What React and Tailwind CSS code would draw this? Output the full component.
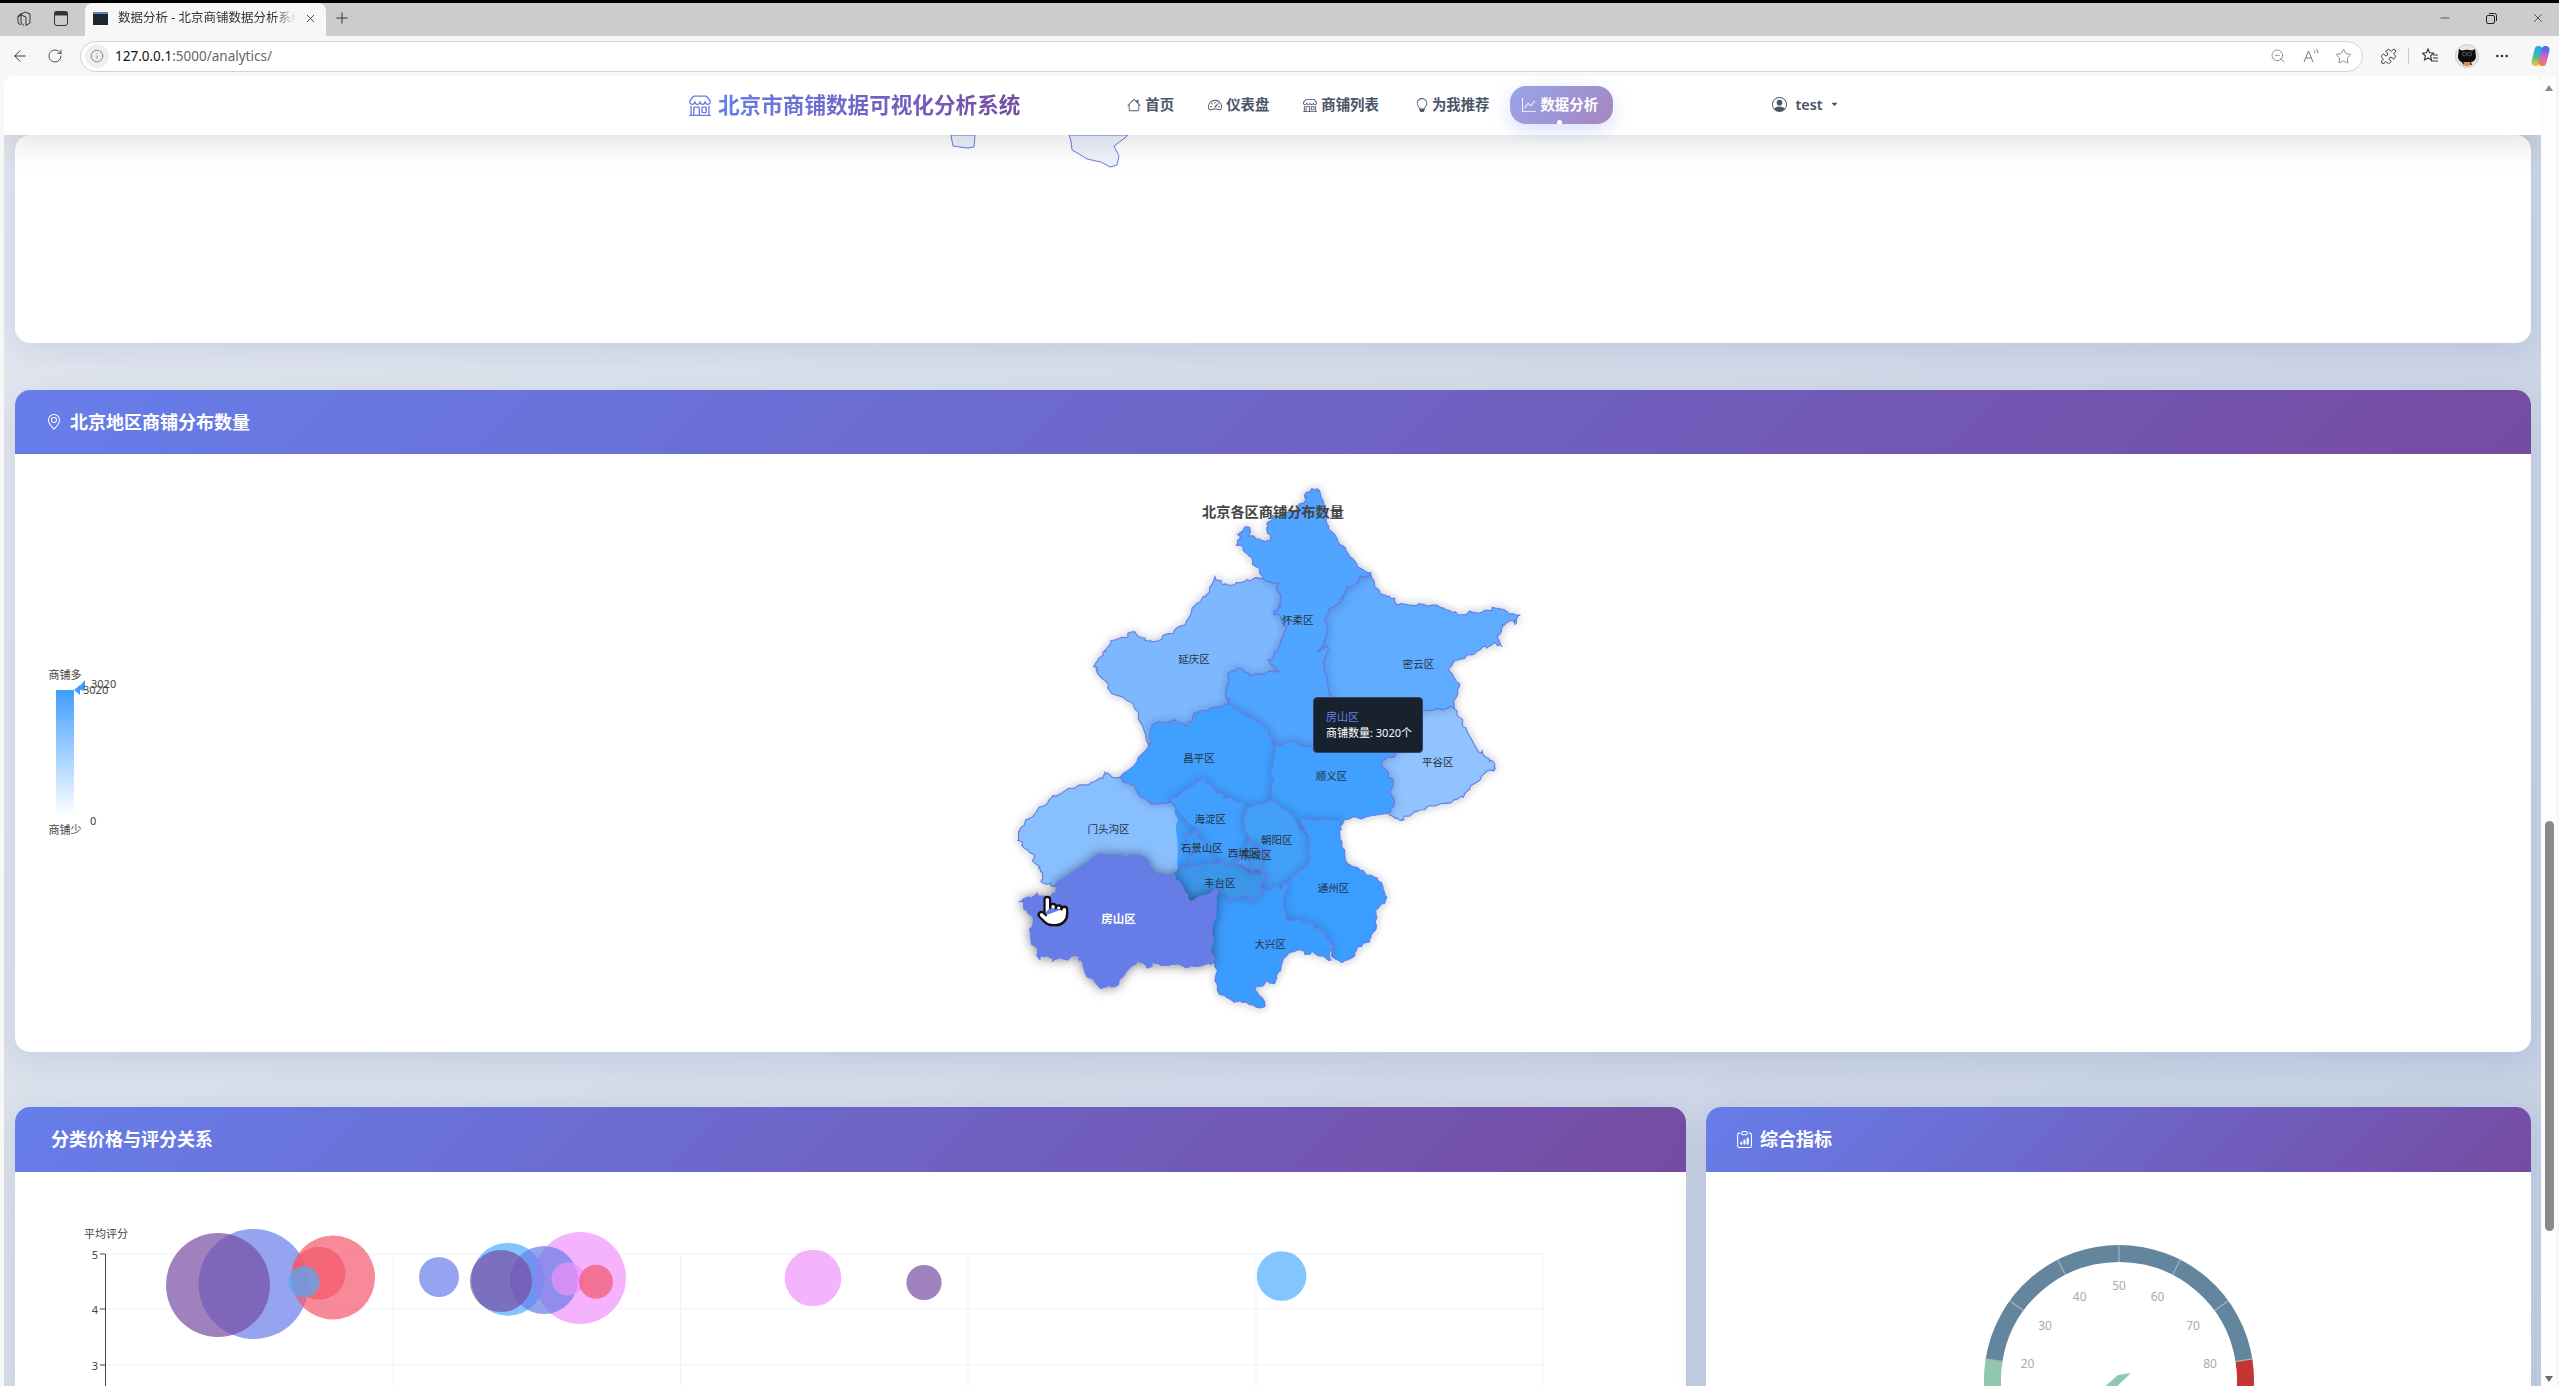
import React from "react";
import { ArrowLeft, RotateCw, Info, ZoomOut, Star, Puzzle, Minus, X, Plus, Ellipsis, Pointer } from "lucide-react";
import { BsShop, BsHouse, BsSpeedometer2, BsLightbulb, BsGraphUp, BsPersonCircle, BsGeoAlt, BsClipboardData, BsCaretDownFill } from "react-icons/bs";

const mx = (x) => 990 + x / 2.8;
const my = (y) => 470 + y / 3;
const noise = (x, y) => [
  Math.sin(x * 0.73 + y * 0.31) * 1.1 + Math.sin(x * 0.19 - y * 0.47) * 0.8 + Math.sin(x * 1.7 + y * 2.1) * 0.8,
  Math.sin(x * 0.37 - y * 0.83) * 1.1 + Math.cos(x * 0.53 + y * 0.17) * 0.8 + Math.cos(x * 2.3 - y * 1.3) * 0.8,
];
const sub = (a, b, d) => {
  if (d === 0) return [];
  const m = [(a[0] + b[0]) / 2, (a[1] + b[1]) / 2];
  const n = noise(m[0], m[1]);
  const p = [m[0] + n[0], m[1] + n[1]];
  return [...sub(a, p, d - 1), p, ...sub(p, b, d - 1)];
};
const rough = (pts) => {
  const r = pts.map(([x, y]) => [mx(x), my(y)]);
  const out = [];
  r.forEach((p, i) => {
    out.push(p);
    out.push(...sub(p, r[(i + 1) % r.length], 3));
  });
  return "M" + out.map((p) => p[0].toFixed(1) + " " + p[1].toFixed(1)).join("L") + "Z";
};
const Z = 870;
const shift = (a) => a.map(([x, y]) => [x, y + Z]);
const regions = [
  { c: "#88bfff", p: shift([[80,240],[100,180],[165,120],[220,85],[300,60],[320,35],[365,50],[450,130],[505,125],[580,210],[545,225],[570,290],[515,340],[465,350],[430,290],[310,280],[180,380],[145,360],[140,320],[105,270]]) },
  { c: "#7db8ff", p: [[630,320],[665,345],[740,325],[808,340],[810,400],[795,425],[830,475],[815,520],[780,570],[810,605],[730,618],[700,595],[665,610],[665,690],[675,705],[570,730],[555,770],[500,755],[455,765],[445,825],[400,700],[340,670],[310,620],[290,590],[320,540],[350,510],[405,485],[455,515],[545,465],[580,400],[610,370]] },
  { c: "#90c3ff", p: [[1210,720],[1300,715],[1325,770],[1375,850],[1400,870],[1415,895],[1385,910],[1330,970],[1270,1000],[1200,1020],[1155,1048],[1115,1030],[1130,1010],[1125,925],[1095,880],[1135,850]] },
  { c: "#5eabff", p: [[1060,310],[1100,375],[1140,405],[1240,405],[1310,435],[1370,430],[1420,415],[1485,435],[1470,465],[1450,455],[1430,490],[1430,525],[1380,530],[1310,570],[1285,595],[1315,650],[1300,715],[1210,720],[1135,850],[950,830],[955,680],[935,600],[945,530],[915,545],[945,470],[950,415],[990,385],[1000,350],[1045,320]] },
  { c: "#4fa5ff", p: [[880,75],[878,100],[850,125],[790,140],[775,160],[785,210],[745,208],[720,170],[692,192],[700,225],[745,290],[775,335],[808,340],[810,400],[795,425],[830,475],[815,520],[780,570],[810,605],[730,618],[700,595],[665,610],[665,690],[675,705],[720,740],[775,775],[795,830],[850,810],[900,830],[950,830],[955,680],[935,600],[945,530],[915,545],[945,470],[950,415],[990,385],[1000,350],[1045,320],[1060,310],[1010,262],[975,215],[945,165],[925,70],[900,57]] },
  { c: "#3fa0ff", p: [[365,920],[445,825],[455,765],[500,755],[555,770],[570,730],[675,705],[720,740],[775,775],[795,830],[790,920],[790,995],[720,1015],[640,970],[595,925],[505,995],[450,1000]] },
  { c: "#3fa0ff", p: [[795,830],[850,810],[900,830],[950,830],[1135,850],[1095,880],[1125,925],[1130,1010],[1115,1030],[990,1050],[870,1050],[790,995],[790,920]] },
  { c: "#3f9fff", base: true, p: [[520,1000],[790,990],[1000,1045],[960,1120],[900,1200],[800,1260],[640,1270],[530,1210]] },
  { c: "#3f9fff", p: shift([[505,125],[595,55],[640,100],[720,145],[710,185],[725,240],[685,310],[640,310],[600,250],[580,210]]) },
  { c: "#3a98f4", p: shift([[580,210],[600,250],[640,310],[565,320],[515,340],[570,290],[545,225]]) },
  { c: "#42a0fb", p: shift([[710,185],[720,145],[790,125],[850,170],[895,240],[885,320],[830,370],[790,385],[755,375],[775,345],[735,335],[760,320],[770,270],[725,240]]) },
  { c: "#3b9dff", p: shift([[870,180],[990,180],[980,240],[1000,310],[1085,355],[1110,410],[1080,450],[1080,510],[1040,560],[1000,600],[960,590],[950,545],[900,490],[830,480],[820,430],[830,370],[885,320],[895,240]]) },
  { c: "#3a9cff", p: shift([[640,390],[670,420],[710,400],[730,425],[760,400],[755,375],[790,385],[830,370],[820,430],[830,480],[900,490],[950,545],[955,600],[900,575],[850,575],[820,600],[800,660],[745,680],[770,740],[690,725],[640,700],[630,620],[620,520]]) },
  { c: "#3a96ea", p: shift([[515,340],[565,320],[640,310],[685,310],[730,340],[775,345],[750,380],[760,400],[730,425],[710,400],[670,420],[640,390],[560,425]]) },
  { c: "#3f9cf6", p: shift([[685,310],[725,240],[740,250],[735,335]]) },
  { c: "#3a98f0", p: shift([[740,250],[770,270],[760,320],[735,335]]) },
];
const fang = shift([[180,380],[310,280],[430,290],[465,350],[515,340],[560,425],[640,390],[620,520],[625,610],[560,620],[460,610],[440,625],[415,600],[380,640],[350,680],[310,685],[265,635],[250,590],[180,600],[150,580],[140,600],[115,545],[120,470],[80,425],[110,410],[130,405],[165,415]]);
const labels = [
  ["怀柔区",862,449],["延庆区",571,566],["密云区",1200,581],["昌平区",585,865],["顺义区",956,919],["平谷区",1254,876],["海淀区",617,1048],["门头沟区",332,1076],["朝阳区",803,1110],["石景山区",593,1134],["西城区",710,1150],["东城区",745,1155],["丰台区",643,1238],["通州区",962,1254],["大兴区",785,1421],
];

function MapChart() {
  return (
    <svg width="2516" height="598" viewBox="15 454 2516 598" className="block">
      <defs>
        <filter id="ms" x="-30%" y="-30%" width="160%" height="160%"><feDropShadow dx="0" dy="0" stdDeviation="4" floodColor="#1a2a50" floodOpacity="0.3" /></filter>
        <filter id="mh" x="-30%" y="-30%" width="160%" height="160%"><feDropShadow dx="0" dy="0" stdDeviation="6" floodColor="#000" floodOpacity="0.5" /></filter>
        <linearGradient id="lg" x1="0" y1="0" x2="0" y2="1"><stop offset="0" stopColor="#409eff" /><stop offset="1" stopColor="#fff" /></linearGradient>
      </defs>
      {regions.map((r, i) => (
        r.base
          ? <path key={i} d={rough(r.p)} fill={r.c} />
          : <path key={i} d={rough(r.p)} fill={r.c} stroke="#6a7ce2" strokeWidth="1.100" filter="url(#ms)" />
      ))}
      <path d={rough(fang)} fill="#667be6" stroke="#667be6" strokeWidth="1" filter="url(#mh)" />
      {labels.map(([t, x, y]) => (
        <text key={t} x={mx(x)} y={my(y)} textAnchor="middle" dominantBaseline="central" fontSize="10.500" fill="#263040">{t}</text>
      ))}
      <text x={mx(360)} y={my(1344)} textAnchor="middle" dominantBaseline="central" fontSize="11.500" fontWeight="700" fill="#fff">房山区</text>
      <text x="1273" y="511" textAnchor="middle" dominantBaseline="central" fontSize="14.200" fontWeight="700" fill="#444">北京各区商铺分布数量</text>
      <rect x="56" y="690" width="18" height="125" fill="url(#lg)" />
      <polygon points="74,690 80,685 80,695" fill="#409eff" />
      <polygon points="77,689 85,680 85,691" fill="#409eff" />
      <text x="65" y="674" textAnchor="middle" dominantBaseline="central" fontSize="11" fill="#444">商铺多</text>
      <text x="65" y="829" textAnchor="middle" dominantBaseline="central" fontSize="11" fill="#444">商铺少</text>
      <text x="91" y="683" dominantBaseline="central" fontSize="11" fill="#444">3020</text>
      <text x="83" y="689" dominantBaseline="central" fontSize="11" fill="#444">3020</text>
      <text x="90" y="820" dominantBaseline="central" fontSize="11" fill="#444">0</text>
      <Pointer x="1036" y="894" width="34" height="34" fill="#fff" stroke="#111" strokeWidth="1.600" />
    </svg>
  );
}

const bubbles = [
  [253.6,1284,55,"#667eea"],[218,1285,52,"#764ba2"],[333,1277.5,42,"#f5576c"],[319,1273.3,26.5,"#f5576c"],[304,1281.7,15.5,"#4facfe"],
  [439,1277,20,"#667eea"],[508,1279.3,36.5,"#4facfe"],[580,1278,46,"#f093fb"],[544,1280,34,"#667eea"],[501,1281,31,"#764ba2"],[568,1279,16.5,"#f093fb"],[596,1281.8,17,"#f5576c"],
  [813,1278,28.3,"#f093fb"],[924,1282.5,17.6,"#764ba2"],[1281.6,1276,24.8,"#4facfe"],
];
function Bubble() {
  return (
    <svg width="1671" height="300" viewBox="15 1172 1671 300" className="block">
      {[1254,1309,1365,1420].map((y) => <line key={y} x1="105.5" x2="1543" y1={y} y2={y} stroke="#eef1f7" />)}
      {[393,680.5,968,1256,1543].map((x) => <line key={x} x1={x} x2={x} y1="1254" y2="1472" stroke="#eef1f7" />)}
      <line x1="105.5" x2="105.5" y1="1254" y2="1472" stroke="#444" />
      {[[1254,"5"],[1309,"4"],[1365,"3"]].map(([y,t]) => (
        <g key={t}><line x1="100" x2="105" y1={y} y2={y} stroke="#444" /><text x="95" y={y} textAnchor="middle" dominantBaseline="central" fontSize="11" fill="#444">{t}</text></g>
      ))}
      <text x="106" y="1233" textAnchor="middle" dominantBaseline="central" fontSize="11" fill="#444">平均评分</text>
      {bubbles.map(([x,y,r,c],i) => <circle key={i} cx={x} cy={y} r={r} fill={c} fillOpacity="0.7" />)}
    </svg>
  );
}

const CX = 2119, CY = 1380;
const pol = (v, r) => {
  const a = ((225 - v * 2.7) * Math.PI) / 180;
  return [CX + r * Math.cos(a), CY - r * Math.sin(a)];
};
const arc = (a, b) => {
  const [x1,y1] = pol(a,126.5), [x2,y2] = pol(b,126.5);
  return `M${x1} ${y1}A126.5 126.5 0 ${(b-a)*2.7>180?1:0} 1 ${x2} ${y2}`;
};
const gaugeLabels = [["20",2027.5,1363],["30",2045,1325.7],["40",2079.7,1296],["50",2119,1285],["60",2157.6,1296],["70",2193,1325.7],["80",2210,1363]];
function Gauge() {
  return (
    <svg width="825" height="300" viewBox="1706 1172 825 300" className="block">
      <path d={arc(0,20)} fill="none" stroke="#91c7ae" strokeWidth="17" />
      <path d={arc(20,80)} fill="none" stroke="#63869e" strokeWidth="17" />
      <path d={arc(80,100)} fill="none" stroke="#c23531" strokeWidth="17" />
      {[10,20,30,40,50,60,70,80,90].map((v) => {
        const [x1,y1]=pol(v,135), [x2,y2]=pol(v,118);
        return <line key={v} x1={x1} y1={y1} x2={x2} y2={y2} stroke="#a9b3bb" strokeWidth="1.200" />;
      })}
      {gaugeLabels.map(([t,x,y]) => (
        <text key={t} x={x} y={y} textAnchor="middle" dominantBaseline="central" fontSize="12" fill="#aaa">{t}</text>
      ))}
      <polygon points="2131,1373 2118,1375 2100,1391 2112,1391" fill="#91c7ae" />
    </svg>
  );
}

function CardHead({ icon, title, pad, h }) {
  return (
    <div className={`flex items-center rounded-t-[15px] bg-[linear-gradient(135deg,#667eea,#764ba2)] text-[18px] font-bold text-white ${h} ${pad}`}>
      {icon}
      <span>{title}</span>
    </div>
  );
}
const cardCls = "rounded-[15px] bg-white shadow-[0_8px_32px_rgba(31,38,135,0.1)]";

function NavItem({ icon, label, cls }) {
  return (
    <div className={`flex items-center text-[14.400px] font-semibold text-[#4a5568] ${cls}`}>
      {icon}
      <span>{label}</span>
    </div>
  );
}

function Copilot() {
  return (
    <svg width="23" height="22" viewBox="0 0 23 22">
      <defs>
        <linearGradient id="c1" gradientUnits="userSpaceOnUse" x1="9" y1="3" x2="6" y2="20"><stop offset="0" stopColor="#2aa7e8" /><stop offset="0.55" stopColor="#45c38a" /><stop offset="1" stopColor="#f3c23c" /></linearGradient>
        <linearGradient id="c2" gradientUnits="userSpaceOnUse" x1="17" y1="3" x2="14" y2="20"><stop offset="0" stopColor="#4a6cf0" /><stop offset="0.55" stopColor="#d65fd0" /><stop offset="1" stopColor="#f08040" /></linearGradient>
      </defs>
      <line x1="9.500" y1="5" x2="6.500" y2="17" stroke="url(#c1)" strokeWidth="8" strokeLinecap="round" />
      <line x1="16.500" y1="5" x2="13.500" y2="17" stroke="url(#c2)" strokeWidth="8" strokeLinecap="round" />
    </svg>
  );
}

function Avatar() {
  return (
    <svg width="24" height="24" viewBox="0 0 24 24">
      <circle cx="12" cy="12" r="11.500" fill="#efe6dc" stroke="#c9c9c9" />
      <path d="M4 5l3 1.500c3-1 7-1 10 0L20 5l1 7c0 4-3 6-5 6l1 3H8l-1-3c-2-.5-4-2-4-6z" fill="#0c0c0c" />
      <circle cx="9.500" cy="10" r="2" fill="none" stroke="#777" strokeWidth="0.700" />
      <circle cx="14.500" cy="10" r="2" fill="none" stroke="#777" strokeWidth="0.700" />
      <path d="M8 21c2 1.500 6 1.500 8 0l-1-3H9z" fill="#d98a5e" />
    </svg>
  );
}

export default function App() {
  return (
    <div className="flex h-[1386px] w-[2559px] flex-col overflow-hidden bg-[#f7f7f7] font-['Noto_Sans','Noto_Sans_CJK_SC',sans-serif]">
      <div className="h-[3px] shrink-0 bg-black" />
      {/* tab strip */}
      <div className="flex h-[33px] shrink-0 items-center bg-[#cccccc] pb-[3px] text-[#222]">
        <svg className="ml-[16px]" width="16" height="17" viewBox="0 0 16 17" fill="none" stroke="#333" strokeWidth="1">
          <path d="M4 5l5-3 5 2v9l-4 2.500V7L5 5zM2 7l3-2v8l3 2.500M6 3l-4 3v7l3 2" />
        </svg>
        <svg className="ml-[22px]" width="14" height="15" viewBox="0 0 14 15" fill="none" stroke="#333">
          <rect x="0.500" y="0.500" width="13" height="14" rx="2.500" />
          <rect x="1" y="1" width="12" height="3" fill="#333" />
        </svg>
        <div className="-mb-[3px] ml-[17px] flex h-[33px] w-[241px] items-center self-end rounded-t-[8px] bg-[#f7f7f7] pb-[3px] pl-[8px]">
          <div className="h-[13px] w-[15px] border-t-2 border-[#5b87b8] bg-[#1c2730]" />
          <span className="ml-[10px] w-[178px] overflow-hidden whitespace-nowrap text-[12.500px] text-[#333] [mask-image:linear-gradient(90deg,#000_88%,transparent)]">数据分析 - 北京商铺数据分析系统</span>
          <X className="ml-[8px]" size={13} strokeWidth={1.5} />
        </div>
        <Plus className="ml-[7px]" size={18} strokeWidth={1.2} />
        <div className="ml-auto flex items-center">
          <Minus size={14} strokeWidth={1.2} />
          <svg className="ml-[34px]" width="11" height="11" viewBox="0 0 11 11" fill="none" stroke="#222"><rect x="0.500" y="2.500" width="8" height="8" rx="1.500" /><path d="M3 .500h5.500a2 2 0 0 1 2 2V8" /></svg>
          <X className="ml-[34px] mr-[14px]" size={14} strokeWidth={1.2} />
        </div>
      </div>
      {/* toolbar */}
      <div className="flex h-[40px] shrink-0 items-center text-[#333]">
        <ArrowLeft className="ml-[11px]" size={18} strokeWidth={1.3} />
        <RotateCw className="ml-[18px]" size={16} strokeWidth={1.3} />
        <div className="ml-[17px] flex h-[31px] w-[2283px] items-center rounded-full border border-[#d2d2d2] bg-white pl-[4px]">
          <div className="flex h-[24px] w-[24px] items-center justify-center rounded-full bg-[#efefef]">
            <Info size={14} strokeWidth={1.2} className="text-[#666]" />
          </div>
          <span className="ml-[6px] text-[13.500px] text-[#111]">127.0.0.1<span className="text-[#666]">:5000/analytics/</span></span>
          <div className="ml-auto flex items-center pr-[10px] text-[#777]">
            <ZoomOut size={16} strokeWidth={1.2} />
            <svg className="ml-[17px]" width="16" height="16" viewBox="0 0 16 16" fill="none" stroke="#777" strokeWidth="1"><path d="M1 14L5.500 3 10 14M2.800 10h5.400M10.500 2c1 .8 1.500 1.800 1.500 3M13 1c1.300 1 2 2.400 2 4" /></svg>
            <Star className="ml-[16px]" size={17} strokeWidth={1.2} />
          </div>
        </div>
        <Puzzle className="ml-[17px]" size={17} strokeWidth={1.3} />
        <div className="ml-[11px] h-[16px] w-px bg-[#ccc]" />
        <svg className="ml-[13px]" width="17" height="16" viewBox="0 0 17 16" fill="none" stroke="#333" strokeWidth="1.100"><path d="M6 1l1.600 3.800 4 .4-3 2.700.9 4L6 10l-3.500 2 .9-4L.500 5.200l4-.4zM11 7h5M11 10h5M9 13h7" /></svg>
        <div className="ml-[16px]"><Avatar /></div>
        <Ellipsis className="ml-[15px]" size={16} strokeWidth={2} />
        <div className="ml-[19px]"><Copilot /></div>
      </div>
      {/* viewport */}
      <div className="flex min-h-0 flex-1">
        <div className="ml-[4px] flex w-[2537px] flex-col overflow-hidden rounded-t-[8px] bg-[linear-gradient(135deg,#e3e8ef,#c3cfe2)]">
          <nav className="relative z-10 flex h-[59px] shrink-0 items-center bg-white pb-[1px] pl-[685px] shadow-[0_8px_32px_rgba(0,0,0,0.12)]">
            <BsShop size={22} className="text-[#6a7be0]" />
            <span className="ml-[7px] bg-[linear-gradient(90deg,#667eea,#764ba2)] bg-clip-text text-[21.600px] font-bold text-transparent">北京市商铺数据可视化分析系统</span>
            <NavItem cls="ml-[107px]" icon={<BsHouse size={14} className="mr-[4px]" />} label="首页" />
            <NavItem cls="ml-[34px]" icon={<BsSpeedometer2 size={14} className="mr-[4px]" />} label="仪表盘" />
            <NavItem cls="ml-[34px]" icon={<BsShop size={14} className="mr-[4px]" />} label="商铺列表" />
            <NavItem cls="ml-[36px]" icon={<BsLightbulb size={14} className="mr-[3px]" />} label="为我推荐" />
            <div className="relative ml-[21px] flex h-[38px] w-[103px] items-center rounded-[16px] bg-[linear-gradient(135deg,#98a6ea,#a585c0)] pl-[12px] text-[14.400px] font-semibold text-white shadow-[0_6px_18px_rgba(102,126,234,0.25)]">
              <BsGraphUp size={14} className="mr-[4px]" />
              <span>数据分析</span>
              <div className="absolute bottom-0 left-[47px] h-[4px] w-[5px] rounded-t-full bg-white" />
            </div>
            <div className="ml-[159px] flex items-center text-[14.400px] font-semibold text-[#4a5568]">
              <BsPersonCircle size={15} className="mr-[8px]" />
              <span>test</span>
              <BsCaretDownFill size={7} className="ml-[8px]" />
            </div>
          </nav>
          <div className="flex flex-col pl-[11px]">
            <div className={`h-[208px] w-[2516px] ${cardCls}`}>
              <svg width="2516" height="208" viewBox="15 135 2516 208" className="block">
                <path d="M951 135l1 6 1 5 7 1 8 1 6-1 1-12z" fill="#eef3fb" stroke="#6a7be0" />
                <path d="M1069 135l2 6 1 9 7 4 8 5 14 3 9 5 7-2 2-9-5-10 4-3 7-5 3-3z" fill="#eef3fb" stroke="#6a7be0" />
              </svg>
            </div>
            <div className={`relative mt-[47px] w-[2516px] ${cardCls}`}>
              <CardHead h="h-[64px]" pad="pl-[31px]" icon={<BsGeoAlt size={16} className="mr-[8px]" />} title="北京地区商铺分布数量" />
              <MapChart />
              <div className="absolute left-[1298px] top-[307px] flex h-[56px] w-[110px] flex-col justify-center gap-[2px] rounded-[4px] border border-[#34406a] bg-[#18222f] pl-[12px] text-[11px] leading-[14px] text-white">
                <span className="text-[#6d7fe8]">房山区</span>
                <span>商铺数量: 3020个</span>
              </div>
            </div>
            <div className="mt-[55px] grid w-[2516px] grid-cols-[1671px_825px] gap-[20px]">
              <div className={cardCls}>
                <CardHead h="h-[65px]" pad="pl-[36px]" title="分类价格与评分关系" />
                <Bubble />
              </div>
              <div className={cardCls}>
                <CardHead h="h-[65px]" pad="pl-[30px]" icon={<BsClipboardData size={17} className="mr-[7px]" />} title="综合指标" />
                <Gauge />
              </div>
            </div>
          </div>
        </div>
        <div className="relative w-[15px] shrink-0 bg-[#fdfdfd]">
          <div className="absolute left-[4px] top-[9px] h-0 w-0 border-x-[4.500px] border-b-[6px] border-x-transparent border-b-[#8a8a8a]" />
          <div className="absolute left-[4px] top-[745px] h-[410px] w-[9px] rounded-full bg-[#8a8a8a]" />
          <div className="absolute bottom-[4px] left-[4px] h-0 w-0 border-x-[4.500px] border-t-[6px] border-x-transparent border-t-[#6a6a6a]" />
        </div>
      </div>
    </div>
  );
}
